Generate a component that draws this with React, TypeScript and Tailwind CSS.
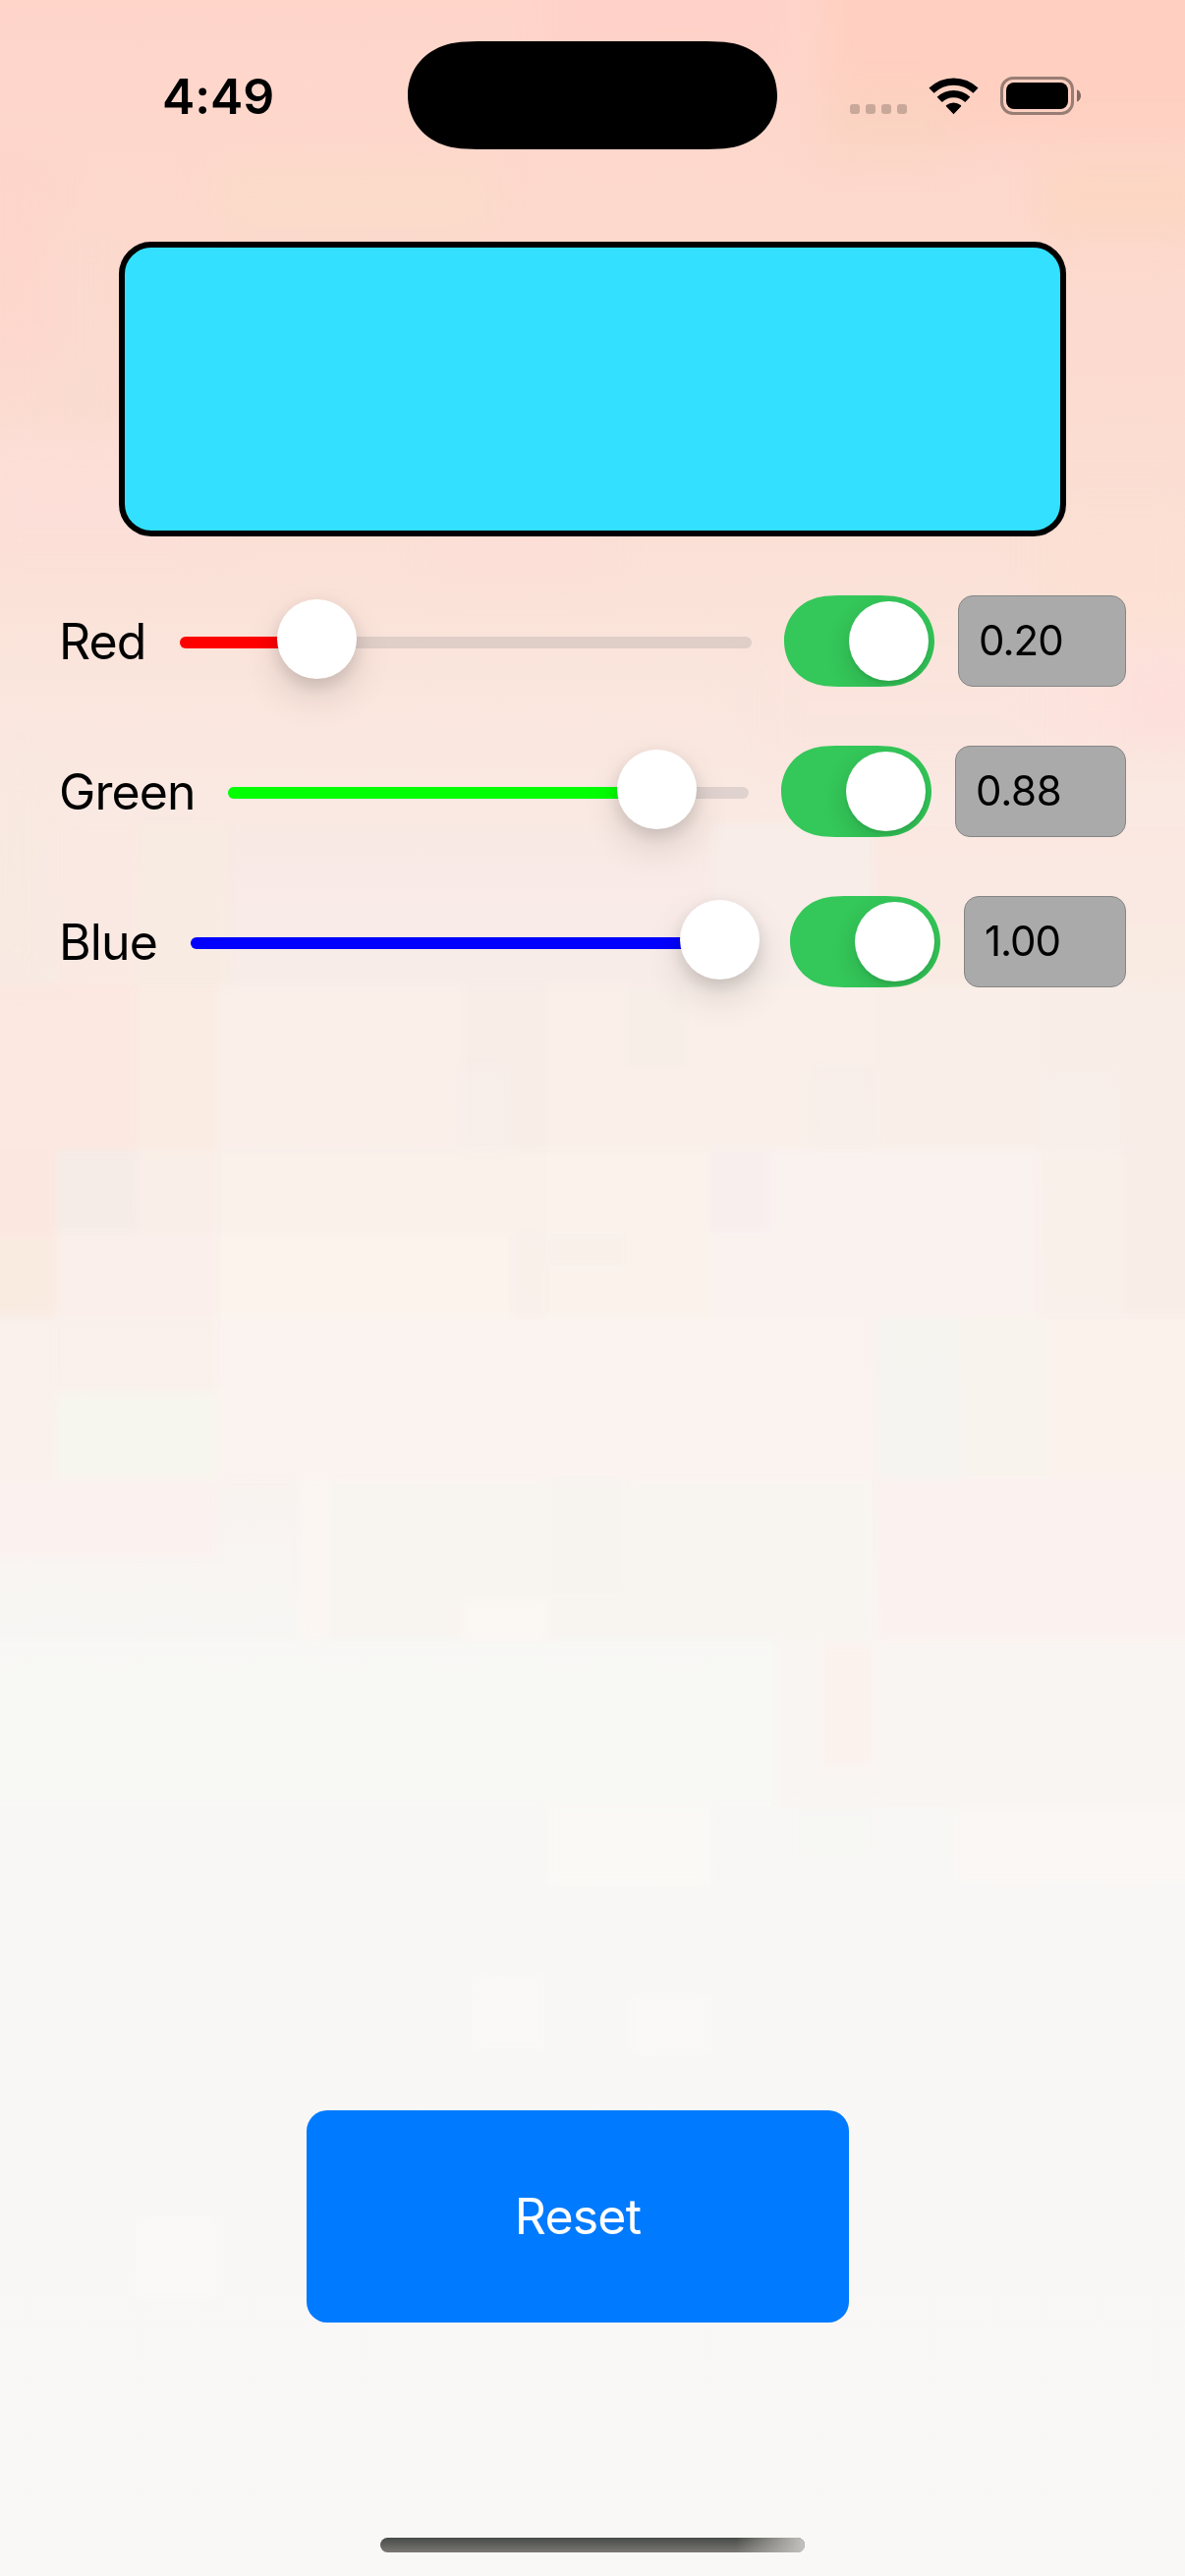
import React from "react";

type Channel = {
  name: string;
  value: string;
  fill: string;
  labelWidth: string;
  trackWidth: string;
  fieldStyle: string;
  thumb: number;
};

const channels: Channel[] = [
  { name: "Red", value: "0.20", fill: "bg-[#ff0000]", labelWidth: "w-[123px]", trackWidth: "w-[582px]", fieldStyle: "w-[171px] tracking-[-1px]", thumb: 99 },
  { name: "Green", value: "0.88", fill: "bg-[#00ff00]", labelWidth: "w-[172px]", trackWidth: "w-[530px]", fieldStyle: "w-[174px] tracking-[-0.3px]", thumb: 396 },
  { name: "Blue", value: "1.00", fill: "bg-[#0000ff]", labelWidth: "w-[134px]", trackWidth: "w-[577px]", fieldStyle: "w-[165px] tracking-[-1px]", thumb: 498 },
];

type Patch = [number, number, number, number, string, number];

// Soft colour patches of the wallpaper: x, y, width, height, colour, opacity
const softPatches: Patch[] = [
  [560, -40, 240, 110, "#ffcdc6", 0.5],
  [840, -60, 420, 200, "#ffcab8", 0.5],
  [221, 165, 280, 72, "#f9dfc9", 0.55],
  [840, 90, 130, 75, "#f8d6c0", 0.5],
  [1060, 165, 170, 70, "#fcd5bf", 0.7],
  [-20, 165, 75, 200, "#ffd3ca", 0.4],
  [55, 240, 66, 190, "#fadbd0", 0.5],
  [-20, 440, 240, 120, "#fde0db", 0.6],
  [440, 545, 170, 40, "#ffdeda", 0.5],
  [1060, 510, 160, 150, "#fcdfd1", 0.7],
  [1060, 640, 160, 120, "#fde1dc", 0.7],
  [1146, 670, 80, 90, "#fddcd9", 0.5],
  [780, 670, 300, 100, "#fce4dd", 0.5],
  [-20, 780, 75, 220, "#f8e9df", 0.8],
];

// Crisper mosaic in the middle band
const mosaicPatches: Patch[] = [
  [57, 838, 82, 164, "#fbe8e1", 0.7],
  [139, 838, 92, 164, "#f8ebe0", 0.8],
  [724, 838, 166, 164, "#f8eee9", 0.8],
  [890, 838, 340, 100, "#fbe7df", 0.7],
  [890, 938, 340, 64, "#faeae0", 0.7],
  [-20, 1002, 159, 168, "#fce7df", 0.9],
  [139, 1002, 82, 168, "#f9ebe1", 0.9],
  [221, 1002, 251, 168, "#f9eee9", 0.9],
  [472, 1002, 84, 84, "#f7ece7", 0.9],
  [515, 1086, 41, 84, "#f7ede7", 0.9],
  [556, 1002, 82, 168, "#f9efe9", 0.9],
  [638, 1002, 60, 84, "#f7ede8", 0.9],
  [638, 1086, 188, 84, "#faf0e9", 0.9],
  [698, 1002, 192, 84, "#f9f0e9", 0.9],
  [890, 1002, 168, 168, "#faeee8", 0.9],
  [1058, 1002, 84, 90, "#f8ede7", 0.9],
  [1142, 1002, 80, 338, "#f8ece7", 0.9],
  [-20, 1170, 77, 88, "#fce6df", 0.9],
  [-20, 1258, 77, 82, "#faeae0", 0.9],
  [57, 1170, 82, 84, "#f5ebe6", 0.8],
  [57, 1254, 164, 86, "#f9eeea", 0.9],
  [139, 1170, 82, 84, "#f9ede8", 0.9],
  [221, 1170, 335, 86, "#f9f0ea", 0.95],
  [221, 1256, 300, 84, "#fbf2ec", 0.95],
  [521, 1256, 35, 84, "#f8f0ea", 0.9],
  [556, 1170, 168, 170, "#faf1eb", 0.95],
  [556, 1256, 82, 32, "#f8f0ea", 0.9],
  [724, 1170, 332, 170, "#faf1ef", 0.95],
  [724, 1170, 60, 84, "#f8eeee", 0.8],
  [1056, 1170, 86, 170, "#faefea", 0.9],
  [-20, 1340, 77, 165, "#faf0eb", 0.8],
  [57, 1340, 164, 74, "#faf0eb", 0.9],
  [57, 1418, 164, 87, "#f7f5ed", 0.95],
  [221, 1340, 669, 165, "#fbf2ef", 0.95],
  [893, 1340, 86, 165, "#f6f3ef", 0.95],
  [979, 1340, 90, 165, "#f9f2ed", 0.95],
  [1069, 1340, 153, 165, "#fbf1eb", 0.95],
  [-20, 1505, 241, 80, "#fbf1ef", 0.8],
  [305, 1505, 30, 165, "#fbf6f2", 0.9],
  [335, 1505, 555, 165, "#f8f4f0", 0.85],
  [472, 1630, 84, 40, "#fcf7f4", 0.9],
  [556, 1505, 82, 120, "#f6f3ef", 0.7],
  [893, 1505, 329, 165, "#fbf1ef", 0.95],
  [-20, 1670, 810, 170, "#f8f7f5", 0.8],
  [790, 1670, 430, 170, "#f9f4f1", 0.85],
  [838, 1672, 50, 125, "#fbf1ee", 0.8],
  [970, 1840, 250, 80, "#faf6f4", 0.8],
  [556, 1840, 168, 80, "#faf9f6", 0.8],
  [808, 1842, 84, 50, "#f6f6f3", 0.7],
  [480, 2010, 75, 76, "#fbfaf8", 0.7],
  [640, 2030, 83, 62, "#fbfaf8", 0.7],
  [139, 2255, 81, 85, "#fbfaf8", 0.7],
];

function PatchGroup({ patches, filter }: { patches: Patch[]; filter: string }) {
  return (
    <g filter={filter}>
      {patches.map(([x, y, w, h, c, o], i) => (
        <rect key={i} x={x} y={y} width={w} height={h} fill={c} opacity={o} />
      ))}
    </g>
  );
}

function Wallpaper() {
  return (
    <svg className="absolute inset-0 h-full w-full" viewBox="0 0 1206 2622" preserveAspectRatio="none" aria-hidden="true">
      <defs>
        <linearGradient id="base" x1="0" y1="0" x2="0" y2="1">
          <stop offset="0" stopColor="#ffd5ca" />
          <stop offset="0.08" stopColor="#fdd8cc" />
          <stop offset="0.15" stopColor="#fcdbd0" />
          <stop offset="0.21" stopColor="#fbe0d6" />
          <stop offset="0.27" stopColor="#fae6dd" />
          <stop offset="0.31" stopColor="#fae9e2" />
          <stop offset="0.34" stopColor="#f9eae7" />
          <stop offset="0.4" stopColor="#f8eee9" />
          <stop offset="0.5" stopColor="#f8f0ec" />
          <stop offset="0.57" stopColor="#f9f2ef" />
          <stop offset="0.61" stopColor="#f8f5f2" />
          <stop offset="0.65" stopColor="#f8f7f5" />
          <stop offset="1" stopColor="#f9f8f6" />
        </linearGradient>
        <filter id="soft" x="-10%" y="-10%" width="120%" height="120%" colorInterpolationFilters="sRGB">
          <feGaussianBlur stdDeviation="18" />
        </filter>
        <filter id="crisp" x="-5%" y="-5%" width="110%" height="110%" colorInterpolationFilters="sRGB">
          <feGaussianBlur stdDeviation="4" />
        </filter>
      </defs>
      <rect width="1206" height="2622" fill="url(#base)" />
      <PatchGroup patches={softPatches} filter="url(#soft)" />
      <PatchGroup patches={mosaicPatches} filter="url(#crisp)" />
    </svg>
  );
}

function StatusBar() {
  return (
    <header className="flex h-[246px] items-start">
      <div className="w-[415px] pt-[65px] pl-[165px] text-[50px] leading-[66px] font-semibold tracking-[-0.1px]">4:49</div>
      <div className="mt-[42px] h-[110px] w-[376px] bg-black [clip-path:path('M78_0H298C316_0_330_0.5_341_5C362_13_376_31_376_55C376_79_362_97_341_105C330_109.5_316_110_298_110H78C60_110_46_109.5_35_105C14_97_0_79_0_55C0_31_14_13_35_5C46_0.5_60_0_78_0Z')]" />
      <div className="mt-[78px] ml-[74px] flex items-start">
        <div className="mt-[28px] flex gap-[6px]">
          {[0, 1, 2, 3].map((i) => (
            <span key={i} className="h-[10px] w-[10px] rounded-[3px] bg-black/20" />
          ))}
        </div>
        <svg className="mt-[1px] ml-[22px] h-[38px] w-[51px]" viewBox="0 0 51 38" aria-label="Wi-Fi">
          <g fill="none" stroke="#000" strokeWidth="7.3">
            <path d="M3 13.2a32.2 32.2 0 0 1 45 0" />
            <path d="M11.2 22.4a20.5 20.5 0 0 1 28.6 0" />
          </g>
          <path d="M25.5 37.2l-7.4-7.6a1 1 0 0 1 .1-1.5 11.4 11.4 0 0 1 14.6 0 1 1 0 0 1 .1 1.5z" fill="#000" />
        </svg>
        <svg className="ml-[22px] h-[39px] w-[83px]" viewBox="0 0 83 39" aria-label="Battery">
          <rect x="1.5" y="1.5" width="72" height="36" rx="11.5" fill="none" stroke="#000" strokeOpacity="0.4" strokeWidth="3" />
          <rect x="6" y="6" width="63" height="27" rx="8" fill="#000" />
          <path d="M78 13.2c2.6 1 4 3.4 4 6.2s-1.4 5.2-4 6.2z" fill="#000" fillOpacity="0.5" />
        </svg>
      </div>
    </header>
  );
}

function Slider({ channel }: { channel: Channel }) {
  return (
    <div className={`relative mt-[3px] h-3 ${channel.trackWidth} rounded-full bg-[#787880]/20`}>
      <div className={`h-3 rounded-full ${channel.fill}`} style={{ width: channel.thumb + 40 }} />
      <div
        className="absolute -top-[38px] h-[81px] w-[81px] rounded-full bg-white shadow-[0_18px_39px_rgba(0,0,0,0.12),0_6px_18px_rgba(0,0,0,0.13)]"
        style={{ left: channel.thumb }}
      />
    </div>
  );
}

function Toggle() {
  return (
    <div className="ml-[33px] flex h-[93px] w-[153px] items-center justify-end bg-[#34c759] pr-[6px] [clip-path:path('M66_0H87C103_0_113_0_123_3.5C140_9_153_26_153_46.5C153_67_140_84_123_89.5C113_93_103_93_87_93H66C50_93_40_93_30_89.5C13_84_0_67_0_46.5C0_26_13_9_30_3.5C40_0_50_0_66_0Z')]">
      <div className="h-[81px] w-[81px] rounded-full bg-white shadow-[0_9px_24px_rgba(0,0,0,0.15),0_3px_3px_rgba(0,0,0,0.06)]" />
    </div>
  );
}

function ChannelRow({ channel }: { channel: Channel }) {
  return (
    <div className="flex h-[93px] items-center">
      <div className={`${channel.labelWidth} text-[50px] leading-[60px] tracking-[-0.9px]`}>{channel.name}</div>
      <Slider channel={channel} />
      <Toggle />
      <div className={`ml-6 flex h-[93px] items-center rounded-[15px] border border-[#858585] bg-[#aaaaaa] pb-[2px] pl-[20px] text-[42px] ${channel.fieldStyle}`}>
        {channel.value}
      </div>
    </div>
  );
}

export default function App() {
  return (
    <div className="relative h-[2622px] w-[1206px] overflow-hidden bg-[#f9f8f6] font-['Inter',sans-serif] text-black">
      <Wallpaper />
      <div className="relative flex h-full flex-col">
        <StatusBar />
        <div className="mx-auto h-[300px] w-[964px] shrink-0 rounded-[33px] border-[6px] border-black bg-[#33e0ff]" />
        <main className="mt-[60px] flex flex-col gap-[60px] pl-[60px]">
          {channels.map((c) => (
            <ChannelRow key={c.name} channel={c} />
          ))}
        </main>
        <button className="mt-[1143px] ml-[312px] h-[216px] w-[552px] shrink-0 rounded-[21px] bg-[#007aff] text-[50px] tracking-[-0.8px] text-white">
          Reset
        </button>
        <div className="mx-auto mt-[219px] h-[15px] w-[432px] shrink-0 overflow-hidden rounded-full bg-linear-to-b from-[#484b47] to-[#7a7875]">
          <div className="ml-auto h-full w-[70px] bg-linear-to-r from-transparent to-[#c4c2bf]" />
        </div>
      </div>
    </div>
  );
}
